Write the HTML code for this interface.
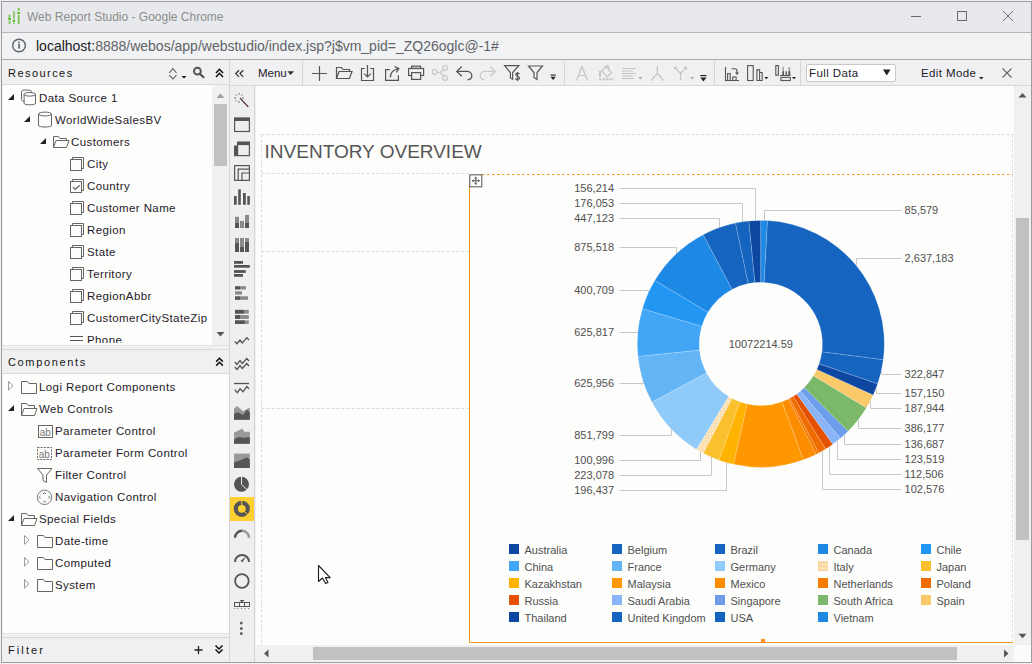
<!DOCTYPE html>
<html><head><meta charset="utf-8">
<style>
*{margin:0;padding:0;box-sizing:border-box}
html,body{width:1032px;height:664px;overflow:hidden;background:#f1f1f1;font-family:"Liberation Sans",sans-serif}
.a{position:absolute}
.tt{position:absolute;font-size:12px;color:#8d8d8d;white-space:nowrap;line-height:14px}
.t{position:absolute;font-size:11.5px;letter-spacing:0.4px;color:#1d1b2b;white-space:nowrap;line-height:14px}
.hdr{position:absolute;font-size:11px;color:#151515;letter-spacing:1.45px;white-space:nowrap;line-height:14px}
svg.ov{position:absolute;left:0;top:0;width:1032px;height:664px;overflow:visible}
</style></head><body>
 <!-- title bar -->
 <div class="a" style="left:1px;top:1px;width:1030px;height:31px;background:#e7e9ec"></div>
 <div class="a" style="left:1px;top:32px;width:1030px;height:1px;background:#b5b6b8"></div>
 <div class="tt" style="left:27px;top:10px">Web Report Studio - Google Chrome</div>
 <!-- address bar -->
 <div class="a" style="left:1px;top:33px;width:1030px;height:26px;background:#f1f2f3"></div>
 <div class="a" style="left:1px;top:59px;width:1030px;height:1px;background:#a9aaac"></div>
 <div class="a" style="left:36px;top:38px;font-size:14px;line-height:16px;color:#5f6368;white-space:nowrap"><span style="color:#202124">localhost:</span>8888/webos/app/webstudio/index.jsp?j$vm_pid=_ZQ26oglc@-1#</div>

 <!-- left panel -->
 <div class="a" style="left:2px;top:60px;width:227px;height:602px;background:#f0f0f2"></div>
 <div class="a" style="left:229px;top:60px;width:1px;height:602px;background:#d6d6d8"></div>
 <div class="a" style="left:2px;top:84px;width:227px;height:1px;background:#dadadc"></div>
 <div class="hdr" style="left:8px;top:66px">Resources</div>
 <div class="a" style="left:3px;top:85px;width:210px;height:260px;background:#fdfdfb"></div>
 <div class="a" style="left:212px;top:87px;width:17px;height:256px;background:#f1f1f1"></div>
 <div class="a" style="left:214px;top:104px;width:13px;height:62px;background:#c1c1c1"></div>
 <div class="a" style="left:2px;top:345px;width:227px;height:1px;background:#e4e4e6"></div>
 <div class="a" style="left:2px;top:349px;width:227px;height:1px;background:#dadadc"></div>
 <div class="a" style="left:2px;top:373px;width:227px;height:1px;background:#dadadc"></div>
 <div class="hdr" style="left:8px;top:355px;letter-spacing:1.65px">Components</div>
 <div class="a" style="left:3px;top:374px;width:226px;height:259px;background:#fdfdfb"></div>
 <div class="a" style="left:2px;top:633px;width:227px;height:1px;background:#e4e4e6"></div>
 <div class="a" style="left:2px;top:637px;width:227px;height:1px;background:#dadadc"></div>
 <div class="hdr" style="left:8px;top:643px;letter-spacing:2.1px">Filter</div>

 <!-- resources tree text -->
 <div class="t" style="left:39px;top:91px">Data Source 1</div>
 <div class="t" style="left:55px;top:113px">WorldWideSalesBV</div>
 <div class="t" style="left:71px;top:135px">Customers</div>
 <div class="t" style="left:87px;top:157px">City</div>
 <div class="t" style="left:87px;top:179px">Country</div>
 <div class="t" style="left:87px;top:201px">Customer Name</div>
 <div class="t" style="left:87px;top:223px">Region</div>
 <div class="t" style="left:87px;top:245px">State</div>
 <div class="t" style="left:87px;top:267px">Territory</div>
 <div class="t" style="left:87px;top:289px">RegionAbbr</div>
 <div class="t" style="left:87px;top:311px">CustomerCityStateZip</div>
 <div class="a" style="left:3px;top:325px;width:210px;height:18px;overflow:hidden">
  <div class="t" style="left:84px;top:8px">Phone</div>
 </div>

 <!-- components tree text -->
 <div class="t" style="left:39px;top:380px">Logi Report Components</div>
 <div class="t" style="left:39px;top:402px">Web Controls</div>
 <div class="t" style="left:55px;top:424px">Parameter Control</div>
 <div class="t" style="left:55px;top:446px">Parameter Form Control</div>
 <div class="t" style="left:55px;top:468px">Filter Control</div>
 <div class="t" style="left:55px;top:490px">Navigation Control</div>
 <div class="t" style="left:39px;top:512px">Special Fields</div>
 <div class="t" style="left:55px;top:534px">Date-time</div>
 <div class="t" style="left:55px;top:556px">Computed</div>
 <div class="t" style="left:55px;top:578px">System</div>

 <!-- main toolbar -->
 <div class="a" style="left:230px;top:60px;width:801px;height:25px;background:#f0f0f2"></div>
 <div class="a" style="left:230px;top:85px;width:801px;height:1px;background:#d8d8da"></div>
 <div class="t" style="left:258px;top:66px;letter-spacing:0">Menu</div>
 <div class="a" style="left:806px;top:64px;width:90px;height:18px;background:#fff;border:1px solid #c9c9cb;border-radius:2px"></div>
 <div class="t" style="left:809px;top:66px">Full Data</div>
 <div class="t" style="left:921px;top:66px">Edit Mode</div>

 <!-- vertical toolbar -->
 <div class="a" style="left:230px;top:86px;width:24px;height:576px;background:#efeff1"></div>
 <div class="a" style="left:254px;top:86px;width:1px;height:576px;background:#d4d4d6"></div>
 <div class="a" style="left:230px;top:497px;width:24px;height:24px;background:#fdcf30"></div>

 <!-- canvas -->
 <div class="a" style="left:256px;top:86px;width:758px;height:559px;background:#fdfdfb"></div>
 <!-- right scrollbar -->
 <div class="a" style="left:1014px;top:86px;width:17px;height:559px;background:#f0f0f2"></div>
 <div class="a" style="left:1016px;top:218px;width:13px;height:322px;background:#c1c1c1"></div>
 <!-- bottom scrollbar -->
 <div class="a" style="left:255px;top:645px;width:759px;height:17px;background:#f0f0f2"></div>
 <div class="a" style="left:313px;top:647px;width:644px;height:13px;background:#c1c1c1"></div>
 <div class="a" style="left:1014px;top:645px;width:17px;height:17px;background:#fbfbfb"></div>

 <!-- window border -->
 <div class="a" style="left:1px;top:1px;width:1031px;height:662px;border:1px solid #9d9d9d"></div>

 <svg class="ov" viewBox="0 0 1032 664">
  <!-- title icon -->
  <g fill="#6cbf3c">
   <rect x="8.7" y="14.8" width="1.6" height="2.6"/><rect x="8" y="17.7" width="3" height="2.2"/><rect x="8.7" y="20.6" width="1.6" height="3.3"/>
   <rect x="13" y="11.2" width="1.8" height="7.2" fill="#8cc566"/><rect x="12.7" y="19.5" width="2.4" height="2.5"/><rect x="13" y="22.8" width="1.8" height="1.1"/>
   <rect x="17.9" y="8" width="1.6" height="2.9"/><rect x="17" y="12.1" width="3.2" height="1.8"/><rect x="17.9" y="14.8" width="1.6" height="9.1"/>
  </g>
  <!-- window controls -->
  <g stroke="#6a6a6a" stroke-width="1" fill="none">
   <path d="M911 16.5H921"/>
   <rect x="957.5" y="11.5" width="9" height="9"/>
   <path d="M1003 11L1013 21M1013 11L1003 21"/>
  </g>
  <!-- info icon -->
  <g>
   <circle cx="19" cy="45.5" r="6.3" fill="none" stroke="#5f6368" stroke-width="1.4"/>
   <rect x="18.2" y="44" width="1.7" height="4.6" fill="#5f6368"/>
   <rect x="18.2" y="41.6" width="1.7" height="1.6" fill="#5f6368"/>
  </g>
  <!-- resources header icons -->
  <g fill="none" stroke="#666" stroke-width="1.15">
   <path d="M169.3 72.8L172.9 68.6L176.5 72.8M169.3 75.2L172.9 79L176.5 75.2"/>
  </g>
  <path d="M181.5 76H186.5L184 78.5Z" fill="#111"/>
  <g fill="none" stroke="#555" stroke-width="2">
   <circle cx="197.4" cy="71.2" r="3.4"/>
   <path d="M200 73.9L203.5 77.2" stroke-linecap="round" stroke-width="2.2"/>
  </g>
  <g fill="none" stroke="#111" stroke-width="1.6">
   <path d="M216 73L219.5 69.3L223 73M216 77L219.5 73.3L223 77"/>
  </g>
  <g fill="none" stroke="#111" stroke-width="1.6">
   <path d="M216.2 361.6L219.5 358.3L222.8 361.6M216.2 365.6L219.5 362.3L222.8 365.6"/>
  </g>
  <!-- scrollbar arrows left panel -->
  <path d="M216.5 98H224.5L220.5 93.5Z" fill="#a0a0a0"/>
  <path d="M216.5 332H224.5L220.5 336.5Z" fill="#555"/>

  <!-- tree triangles -->
  <g fill="#222">
   <path d="M14 94V100H8Z"/>
   <path d="M30 116V122H24Z"/>
   <path d="M46 138V144H40Z"/>
   <path d="M14 405V411H8Z"/>
   <path d="M14 515V521H8Z"/>
  </g>
  <g fill="none" stroke="#9a9a9a" stroke-width="1">
   <path d="M8.5 381.5L13 385.8L8.5 390.2Z"/>
   <path d="M24.5 535.5L29 539.8L24.5 544.2Z"/>
   <path d="M24.5 557.5L29 561.8L24.5 566.2Z"/>
   <path d="M24.5 579.5L29 583.8L24.5 588.2Z"/>
  </g>
  <!-- data source icon -->
  <g fill="none" stroke="#666" stroke-width="1">
   <path d="M21.5 91.5V99.5C21.5 100.5 22.5 101 24 101.3"/>
   <path d="M21.5 91.5C21.5 89.5 31.5 89.5 31.5 91.5"/>
   <path d="M31.5 91.5V92.6"/>
   <ellipse cx="29.8" cy="94.3" rx="5.7" ry="1.8" fill="#fdfdfb"/>
   <path d="M24.1 94.3V103.3C24.1 105.3 35.5 105.3 35.5 103.3V94.3"/>
  </g>
  <!-- database icon -->
  <g fill="none" stroke="#666" stroke-width="1">
   <ellipse cx="45" cy="114" rx="6.5" ry="1.9"/>
   <path d="M38.5 114V125.3C38.5 127.6 51.5 127.6 51.5 125.3V114"/>
  </g>
  <!-- open folder Customers -->
  <g fill="none" stroke="#666" stroke-width="1">
   <path d="M53.5 147.5V136.5H58.5L60 138.5H66.5V140.5"/>
   <path d="M53.5 147.5L56 140.5H69L66.5 147.5Z"/>
  </g>
  <!-- checkboxes -->
  <g fill="none" stroke="#666" stroke-width="1" id="cbs">
   <path d="M72.5 159.5V157.5H83.5V168.5H81.5"/><rect x="70.5" y="159.5" width="11" height="11"/>
   <path d="M72.5 181.5V179.5H83.5V190.5H81.5"/><rect x="70.5" y="181.5" width="11" height="11"/>
   <path d="M73 187L75.2 189.3L79.8 185.3" stroke="#666" stroke-width="1.2"/>
   <path d="M72.5 203.5V201.5H83.5V212.5H81.5"/><rect x="70.5" y="203.5" width="11" height="11"/>
   <path d="M72.5 225.5V223.5H83.5V234.5H81.5"/><rect x="70.5" y="225.5" width="11" height="11"/>
   <path d="M72.5 247.5V245.5H83.5V256.5H81.5"/><rect x="70.5" y="247.5" width="11" height="11"/>
   <path d="M72.5 269.5V267.5H83.5V278.5H81.5"/><rect x="70.5" y="269.5" width="11" height="11"/>
   <path d="M72.5 291.5V289.5H83.5V300.5H81.5"/><rect x="70.5" y="291.5" width="11" height="11"/>
   <path d="M72.5 313.5V311.5H83.5V322.5H81.5"/><rect x="70.5" y="313.5" width="11" height="11"/>
  </g>
  <g stroke="#555" stroke-width="1"><path d="M70 336.5H83M70 340.5H83"/></g>


  <!-- components icons -->
  <g fill="none" stroke="#666" stroke-width="1">
   <path d="M21.5 381.5H27.5L29 383.5H36.5V393.5H21.5Z"/>
   <path d="M21.5 415.5V403.5H26.5L28 405.5H34.5V408.5"/>
   <path d="M21.5 415.5L24 408.5H37L34.5 415.5Z"/>
   <rect x="38.5" y="425.5" width="14" height="12"/>
   <rect x="37.5" y="447.5" width="14" height="12" stroke-dasharray="2 1.2"/>
   <path d="M37.5 468.5H52L46.5 475V482.5L43 480.5V475Z"/>
   <circle cx="44.5" cy="497.3" r="7.2" stroke="#777"/>
   <path d="M21.5 525.5V513.5H26.5L28 515.5H34.5V518.5"/>
   <path d="M21.5 525.5L24 518.5H37L34.5 525.5Z"/>
   <path d="M37.5 535.5H43.5L45 537.5H52.5V547.5H37.5Z"/>
   <path d="M37.5 557.5H43.5L45 559.5H52.5V569.5H37.5Z"/>
   <path d="M37.5 579.5H43.5L45 581.5H52.5V591.5H37.5Z"/>
  </g>
  <g fill="#777" font-size="10" font-family="Liberation Sans">
   <text x="39.8" y="435.5">ab</text>
   <text x="38.8" y="457.5">ab</text>
  </g>
  <g fill="none" stroke="#6a6a6a" stroke-width="1">
   <path d="M43.1 494L44.5 492.6L45.9 494M43.1 500.8L44.5 502.2L45.9 500.8M40.5 496L39.1 497.4L40.5 498.8M48.5 496L49.9 497.4L48.5 498.8"/>
  </g>
  <!-- filter footer icons -->
  <path d="M198.5 646V654M194.5 650H202.5" stroke="#222" stroke-width="1.3"/>
  <g fill="none" stroke="#111" stroke-width="1.5">
   <path d="M215.5 645.5L219 649L222.5 645.5M215.5 649.5L219 653L222.5 649.5"/>
  </g>
  <!-- main toolbar -->
  <g fill="none" stroke="#333" stroke-width="1.3">
   <path d="M239 70.3L235.8 73.6L239 76.9M243.2 70.3L240 73.6L243.2 76.9"/>
  </g>
  <path d="M287.3 71.2H294L290.65 75Z" fill="#333"/>
  <g fill="#d4d4d6">
   <rect x="302" y="61" width="1" height="24"/>
   <rect x="564" y="61" width="1" height="24"/>
   <rect x="714" y="61" width="1" height="24"/>
   <rect x="800" y="61" width="1" height="24"/>
  </g>
  <g fill="none" stroke="#555" stroke-width="1.2">
   <path d="M319.5 66V81M312 73.5H327"/>
   <!-- folder open -->
   <path d="M336.5 78.5V67.5H341.5L343 69.5H349.5V71.5"/>
   <path d="M336.5 78.5L339 71.5H352L349.5 78.5Z"/>
   <!-- download -->
   <path d="M364.8 68.5H361.5V80.5H373.5V68.5H370.2"/>
   <path d="M367.5 65V77M364.2 73.6L367.5 76.9L370.8 73.6"/>
   <!-- export -->
   <path d="M389.8 69.6H385.6V80.4H398.4V75.3"/>
   <path d="M390.3 77.6C390.3 72.5 393 69.6 398.8 68.6M394.6 66.5L398.9 68.6L396.3 72.4"/>
   <!-- print -->
   <rect x="411.6" y="66.2" width="9" height="2.2"/>
   <rect x="408.6" y="68.5" width="15" height="7" fill="#f0f0f2"/>
   <rect x="411.6" y="72.6" width="9" height="6.8" fill="#f0f0f2"/>
  </g>
  <g fill="none" stroke="#c9c9c9" stroke-width="1.2">
   <circle cx="434.6" cy="71.9" r="2.3"/><circle cx="445.1" cy="67.9" r="2.3"/><circle cx="445.1" cy="78" r="2.3"/>
   <path d="M437 72.3H440.3L443.4 69.6M440.3 72.3L443.4 76"/>
  </g>
  <g fill="none" stroke="#555" stroke-width="1.3">
   <path d="M456.8 71.4H467C469.8 71.4 471.8 73.3 471.8 75.7C471.8 77.9 470.2 79.5 467.6 79.9"/>
   <path d="M461.8 66.5L456.8 71.4L461.8 76.3"/>
  </g>
  <g fill="none" stroke="#c9c9c9" stroke-width="1.3">
   <path d="M495.2 71.4H485C482.2 71.4 480.2 73.3 480.2 75.7C480.2 77.9 481.8 79.5 484.4 79.9"/>
   <path d="M490.2 66.5L495.2 71.4L490.2 76.3"/>
  </g>
  <g fill="none" stroke="#555" stroke-width="1.2">
   <path d="M504.6 65.6H518.8L512.6 72.6V79.2L510.4 77.9V72.6Z"/>
   <path d="M519.4 74.2C519.2 72.8 515.7 72.6 515.7 74.5C515.7 76.3 519.6 76.1 519.6 78.1C519.6 80 515.6 79.9 515.4 78.4M517.5 72V81" stroke-width="1.2"/>
   <path d="M528.5 66H542.5L537 72.5V79.5L534 77.5V72.5Z"/>
  </g>
  <g fill="#222"><rect x="550.5" y="74.5" width="5.3" height="1.1"/><path d="M550.5 76.8H555.8L553.15 80Z"/></g>
  <!-- disabled text tools -->
  <g fill="none" stroke="#c4c4c4" stroke-width="1.2">
   <path d="M576.5 80.5L582 66.5L587.5 80.5M578.5 75.5H585.5"/>
   <path d="M601.8 71L606 66.8L611.6 72.6L607 76.8Z"/>
   <path d="M604.8 68C604.8 65.2 608.8 65.2 608.8 68.2V71.3"/>
   <path d="M600 71V77" stroke-width="2"/>
   <path d="M599 79.3H613.5" stroke-width="2" stroke-dasharray="2.5 1"/>
   <path d="M622 68.5H636M622 71H633M622 73.5H636M622 76H633M622 78.5H634" stroke-width="1"/>
   <path d="M657.3 66V73.5L651 80.5M657.3 73.5L663.6 80.5"/>
   <path d="M680.5 73.5V80.5M680.5 73.5L674.5 67M680.5 73.5L686.5 67M674.5 67V69.5M674.5 67H677M686.5 67V69.5M686.5 67H684"/>
  </g>
  <g fill="#aaa"><path d="M638.3 77H642.3L640.3 79.4Z"/><path d="M690.2 77H694.2L692.2 79.4Z"/></g>
  <g fill="#222"><rect x="700.3" y="75" width="6.2" height="1.2"/><path d="M700.3 77.5H706.5L703.4 81.5Z"/></g>
  <!-- chart tools -->
  <g fill="none" stroke="#555" stroke-width="1.1">
   <path d="M725.5 67V80.5H739"/>
   <rect x="727.6" y="73.6" width="2.6" height="6.9"/>
   <rect x="732.7" y="77" width="3.4" height="3.5"/>
   <path d="M731.5 68.8H735C736.5 68.8 737 70 737 71.5V73"/>
   <rect x="747.6" y="65.6" width="5.6" height="14.9"/>
   <path d="M756.9 80.5V69.9H759.6V72.5H762.2V80.5ZM759.6 72.5V80.5"/>
   <rect x="775.8" y="65.6" width="2.6" height="9.6"/>
   <path d="M780 75.5H790.5"/>
   <rect x="780.9" y="77.4" width="9.4" height="3.1"/>
  </g>
  <path d="M735 72.5H739L737 75Z" fill="#555"/>
  <g fill="#aaa"><rect x="782.4" y="67" width="1.6" height="8"/><rect x="788.4" y="67" width="1.8" height="8"/></g>
  <g fill="#555"><rect x="782.4" y="71.3" width="1.6" height="4"/><rect x="785.5" y="71.3" width="1.4" height="4"/><rect x="788.4" y="71.3" width="1.8" height="4"/></g>
  <g fill="#222"><path d="M764.3 77H768.3L766.3 79.2Z"/><path d="M792 77H796L794 79.2Z"/></g>
  <!-- select -->
  <path d="M883 69.5H890.5L886.75 75.5Z" fill="#222"/>
  <path d="M979 77H983.5L981.25 79.5Z" fill="#222"/>
  <path d="M1002.5 68.5L1011.5 77.5M1011.5 68.5L1002.5 77.5" stroke="#666" stroke-width="1.1"/>
  <!-- canvas scrollbar arrows -->
  <path d="M1018.5 97.5H1026.5L1022.5 93Z" fill="#555"/>
  <path d="M1018.5 633.8H1026.5L1022.5 638.3Z" fill="#555"/>
  <path d="M268.5 649.5V657.5L264 653.5Z" fill="#555"/>
  <path d="M1004 649.5V657.5L1008.5 653.5Z" fill="#555"/>

  <!-- vertical toolbar -->
  <g fill="none" stroke="#666" stroke-width="1">
   <path d="M240 98L248.3 107" stroke="#5a3a45" stroke-width="1.2"/>
   <path d="M239 93V95M239 101V103M234 98H236M242 98H244M235.5 94.5L236.8 95.8M241.2 100.2L242.5 101.5M235.5 101.5L236.8 100.2M241.2 95.8L242.5 94.5" stroke="#777"/>
  </g>
  <g fill="none" stroke="#555" stroke-width="1.2">
   <rect x="234.6" y="118.2" width="14.8" height="13.3"/>
   <rect x="237.6" y="142.3" width="11.8" height="13.3"/>
   <rect x="234.6" y="165.6" width="14.8" height="14.8"/>
   <path d="M238.2 180.4V169.2H249.4M242 180.4V173H249.4"/>
  </g>
  <g fill="#555">
   <rect x="234" y="117.6" width="16" height="3.4"/>
   <rect x="237" y="141.7" width="13" height="3.4"/>
   <rect x="234" y="145.5" width="3.3" height="10.7"/>
   <!-- bars -->
   <rect x="234" y="196" width="2.7" height="8.8"/><rect x="238.2" y="189.3" width="2.6" height="15.5"/><rect x="243" y="193" width="2.8" height="11.8"/><rect x="247.3" y="196" width="2.5" height="8.8"/>
  </g>
  <g fill="#8a8a8a">
   <rect x="235" y="216.8" width="4" height="11.2"/><rect x="240" y="220.9" width="4" height="7.1"/><rect x="245" y="214.9" width="4" height="13.1"/>
   <rect x="235" y="238" width="4" height="14"/><rect x="240" y="238" width="4" height="14"/><rect x="245" y="238" width="4" height="14"/>
   <rect x="240" y="286.2" width="6" height="3.3"/><rect x="235" y="291.3" width="7" height="3.3"/><rect x="240" y="296.3" width="8" height="3.5"/>
   <rect x="235" y="309.9" width="13.8" height="3.7"/><rect x="235" y="315.1" width="13.8" height="3.8"/><rect x="235" y="320.4" width="13.8" height="3.5"/>
  </g>
  <g fill="#555">
   <rect x="235" y="222.9" width="4" height="5.1"/><rect x="245" y="222.9" width="4" height="5.1"/>
   <rect x="235" y="243" width="4" height="9"/><rect x="240" y="247" width="4" height="5"/><rect x="245" y="242" width="4" height="10"/>
   <rect x="234" y="261" width="9" height="2.8"/><rect x="234" y="265" width="15.8" height="2.7"/><rect x="234" y="270.1" width="11.8" height="2.8"/><rect x="234" y="274" width="9" height="2.8"/>
   <rect x="235" y="286.2" width="5" height="3.3"/><rect x="235" y="296.3" width="5" height="3.5"/>
   <rect x="235" y="309.9" width="8.7" height="3.7"/><rect x="235" y="315.1" width="5" height="3.8"/><rect x="235" y="320.4" width="9.7" height="3.5"/>
  </g>
  <g fill="none" stroke="#555" stroke-width="1.3">
   <path d="M234.8 341.5L237 343.7L240 340L242.3 343L246.8 337.7L249 340"/>
   <path d="M234.8 362L237 364.5L240 360.5L242.3 363.5L246.8 358.5L249 361"/>
   <path d="M234.8 367L237 369.5L240 365.5L242.3 368.5L246.8 363.5L249 366"/>
   <path d="M234 383.5H249"/>
   <path d="M234.8 389.6L237.3 392.6L240 388.8L243 391.8L246.8 386.5L249 388.8"/>
  </g>
  <g fill="#999">
   <path d="M234 408.5L237.3 406L243 411.3L249.8 407.5V419.7H234Z"/>
   <path d="M234 432.5L242.3 428.7L244.5 431.8H249.8V443.8H234Z"/>
   <rect x="234" y="453.6" width="15.8" height="14.3"/>
  </g>
  <g fill="#555">
   <path d="M234 413.7L237.8 412.2L243 415L246.8 409.8L249.8 412.5V419.7H234Z"/>
   <path d="M234 439.3L238.5 437L243.8 437.8L249.8 437V443.8H234Z"/>
   <path d="M234 462.5L240 460.3L242.3 459.5L246.8 457.3L249.8 459.5V467.9H234Z"/>
  </g>
  <!-- pie -->
  <circle cx="241.5" cy="484.3" r="7.5" fill="#555"/>
  <path d="M241.5 476.5V484.3L247 489.8" fill="none" stroke="#efeff1" stroke-width="1"/>
  <!-- donut -->
  <circle cx="241.8" cy="508.8" r="6" fill="none" stroke="#555" stroke-width="4.2"/>
  <path d="M241.8 500V505" stroke="#fdcf30" stroke-width="1"/>
  <path d="M243.8 510.8L248.5 515.5" stroke="#fdcf30" stroke-width="1"/>
  <!-- half gauge -->
  <path d="M235 537.8A7 7 0 0 1 242 530.8" fill="none" stroke="#555" stroke-width="2.4"/>
  <path d="M242 530.8A7 7 0 0 1 249 537.8" fill="none" stroke="#999" stroke-width="2.4"/>
  <!-- speedometer -->
  <path d="M235 561.9A7 7 0 0 1 249 561.9" fill="none" stroke="#555" stroke-width="2"/>
  <path d="M240.5 561L246 556.5L242.5 562.3Z" fill="#555"/>
  <!-- ring -->
  <circle cx="241.9" cy="581" r="6.8" fill="none" stroke="#555" stroke-width="1.8"/>
  <!-- table/flow -->
  <g fill="none" stroke="#555" stroke-width="1">
   <rect x="234.5" y="602.5" width="15" height="4"/>
   <path d="M239.5 602.5V606.5M244.5 602.5V606.5"/>
  </g>
  <path d="M239.5 600H244.5L242 602.5Z" fill="#555"/>
  <g fill="#777"><rect x="234.3" y="608" width="1" height="1"/><rect x="237.5" y="608" width="1" height="1"/><rect x="241" y="608" width="1" height="1"/><rect x="244.5" y="608" width="1" height="1"/><rect x="248" y="608" width="1" height="1"/></g>
  <g fill="#666"><circle cx="241.3" cy="623" r="1.5"/><circle cx="241.3" cy="628.4" r="1.5"/><circle cx="241.3" cy="633.6" r="1.5"/></g>

 </svg>
<!-- CANVAS START -->
 <svg class="ov" viewBox="0 0 1032 664">
  <defs><clipPath id="cv"><rect x="256" y="86" width="758" height="559"/></clipPath></defs>
  <g clip-path="url(#cv)">
   <g fill="none" stroke="#d9dadc" stroke-width="1" stroke-dasharray="3 2">
    <path d="M261.5 134.5H1012.5"/>
    <path d="M261.5 134.5V645"/>
    <path d="M1012.5 134.5V645"/>
    <path d="M261.5 173.5H469"/>
    <path d="M261.5 251.5H469"/>
    <path d="M261.5 408.5H469"/>
   </g>
   <text x="264.6" y="157.6" font-family="Liberation Sans" font-size="19" fill="#555">INVENTORY OVERVIEW</text>
   <path d="M482 174.5H1013" stroke="#f7931e" stroke-width="1" stroke-dasharray="2.4 2.6" fill="none"/>
   <path d="M469.5 186V642.5H1013" stroke="#f7931e" stroke-width="1" fill="none"/>
   <rect x="761" y="639" width="4" height="4" fill="#f7931e"/>
   <rect x="469.8" y="174.8" width="12" height="12" fill="#fdfdfb" stroke="#5f5f5f" stroke-width="1.1"/>
   <g fill="none" stroke="#5f5f5f" stroke-width="1.1"><path d="M475.8 177.5V184.2M472.3 180.8H479.3"/></g>
   <g fill="#5f5f5f"><path d="M474.2 178.6L475.8 176.6L477.4 178.6Z"/><path d="M474.2 183.1L475.8 185.1L477.4 183.1Z"/><path d="M473.6 179.2L471.6 180.8L473.6 182.4Z"/><path d="M478 179.2L480 180.8L478 182.4Z"/></g>
<defs><pattern id="hatch" width="3" height="3" patternUnits="userSpaceOnUse"><rect width="3" height="3" fill="#fde2b6"/><rect x="0" y="0" width="1" height="1" fill="#f6d39e"/><rect x="2" y="1" width="1" height="1" fill="#fff0d8"/></pattern></defs>
<g fill="none" stroke="#c8c8c8" stroke-width="1"><path d="M755.5 220.5V188.5H619.5"/><path d="M742.5 221.8V203.5H619.5"/><path d="M719.5 227.7V218.5H619.5"/><path d="M676.5 254.3V247.5H619.5"/><path d="M648.5 294.3V290.5H619.5"/><path d="M638.5 332.4V332.5H619.5"/><path d="M643.5 380.1V383.5H619.5"/><path d="M671.5 428.8V435.5H619.5"/><path d="M700.5 451.3V460.5H619.5"/><path d="M711.5 456.9V475.5H619.5"/><path d="M726.5 462.5V490.5H619.5"/><path d="M764.5 220.4V210.5H901.5"/><path d="M856.5 264.8V258.5H901.5"/><path d="M881.5 371.9V374.5H901.5"/><path d="M876.5 389.5V393.5H901.5"/><path d="M870.5 401.6V408.5H901.5"/><path d="M858.5 420.1V428.5H901.5"/><path d="M844.5 434.9V444.5H901.5"/><path d="M837.5 441.3V459.5H901.5"/><path d="M829.5 446.7V474.5H901.5"/><path d="M822.5 451.0V489.5H901.5"/></g>
<path d="M760.80 220.40A123.5 123.5 0 0 0 748.78 220.99L754.81 282.59A61.6 61.6 0 0 1 760.80 282.30Z" fill="#0d47a1" stroke="#fff" stroke-opacity="0.35" stroke-width="0.5"/>
<path d="M748.78 220.99A123.5 123.5 0 0 0 735.38 223.04L748.12 283.62A61.6 61.6 0 0 1 754.81 282.59Z" fill="#1565c0" stroke="#fff" stroke-opacity="0.35" stroke-width="0.5"/>
<path d="M735.38 223.04A123.5 123.5 0 0 0 703.09 234.71L732.02 289.44A61.6 61.6 0 0 1 748.12 283.62Z" fill="#1565c0" stroke="#fff" stroke-opacity="0.35" stroke-width="0.5"/>
<path d="M703.09 234.71A123.5 123.5 0 0 0 654.77 280.57L707.92 312.31A61.6 61.6 0 0 1 732.02 289.44Z" fill="#1e88e5" stroke="#fff" stroke-opacity="0.35" stroke-width="0.5"/>
<path d="M654.77 280.57A123.5 123.5 0 0 0 642.40 308.77L701.75 326.38A61.6 61.6 0 0 1 707.92 312.31Z" fill="#2196f3" stroke="#fff" stroke-opacity="0.35" stroke-width="0.5"/>
<path d="M642.40 308.77A123.5 123.5 0 0 0 637.94 356.47L699.52 350.17A61.6 61.6 0 0 1 701.75 326.38Z" fill="#42a5f5" stroke="#fff" stroke-opacity="0.35" stroke-width="0.5"/>
<path d="M637.94 356.47A123.5 123.5 0 0 0 651.97 402.28L706.52 373.02A61.6 61.6 0 0 1 699.52 350.17Z" fill="#64b5f6" stroke="#fff" stroke-opacity="0.35" stroke-width="0.5"/>
<path d="M651.97 402.28A123.5 123.5 0 0 0 696.56 449.38L728.76 396.51A61.6 61.6 0 0 1 706.52 373.02Z" fill="#90caf9" stroke="#fff" stroke-opacity="0.35" stroke-width="0.5"/>
<path d="M696.56 449.38A123.5 123.5 0 0 0 703.33 453.21L732.13 398.42A61.6 61.6 0 0 1 728.76 396.51Z" fill="url(#hatch)" stroke="#fff" stroke-opacity="0.35" stroke-width="0.5"/>
<path d="M703.33 453.21A123.5 123.5 0 0 0 719.05 460.13L739.97 401.87A61.6 61.6 0 0 1 732.13 398.42Z" fill="#fbc02d" stroke="#fff" stroke-opacity="0.35" stroke-width="0.5"/>
<path d="M719.05 460.13A123.5 123.5 0 0 0 733.57 464.36L747.22 403.98A61.6 61.6 0 0 1 739.97 401.87Z" fill="#ffb300" stroke="#fff" stroke-opacity="0.35" stroke-width="0.5"/>
<path d="M733.57 464.36A123.5 123.5 0 0 0 803.43 459.81L782.06 401.71A61.6 61.6 0 0 1 747.22 403.98Z" fill="#ff9800" stroke="#fff" stroke-opacity="0.35" stroke-width="0.5"/>
<path d="M803.43 459.81A123.5 123.5 0 0 0 815.94 454.41L788.30 399.02A61.6 61.6 0 0 1 782.06 401.71Z" fill="#fb8c00" stroke="#fff" stroke-opacity="0.35" stroke-width="0.5"/>
<path d="M815.94 454.41A123.5 123.5 0 0 0 818.82 452.92L789.74 398.28A61.6 61.6 0 0 1 788.30 399.02Z" fill="#f57c00" stroke="#fff" stroke-opacity="0.35" stroke-width="0.5"/>
<path d="M818.82 452.92A123.5 123.5 0 0 0 825.67 448.99L793.16 396.32A61.6 61.6 0 0 1 789.74 398.28Z" fill="#ef6c00" stroke="#fff" stroke-opacity="0.35" stroke-width="0.5"/>
<path d="M825.67 448.99A123.5 123.5 0 0 0 832.88 444.18L796.75 393.92A61.6 61.6 0 0 1 793.16 396.32Z" fill="#e65100" stroke="#fff" stroke-opacity="0.35" stroke-width="0.5"/>
<path d="M832.88 444.18A123.5 123.5 0 0 0 840.39 438.34L800.50 391.00A61.6 61.6 0 0 1 796.75 393.92Z" fill="#8ab4f8" stroke="#fff" stroke-opacity="0.35" stroke-width="0.5"/>
<path d="M840.39 438.34A123.5 123.5 0 0 0 848.14 431.22L804.36 387.45A61.6 61.6 0 0 1 800.50 391.00Z" fill="#6d9eeb" stroke="#fff" stroke-opacity="0.35" stroke-width="0.5"/>
<path d="M848.14 431.22A123.5 123.5 0 0 0 866.45 407.86L813.50 375.80A61.6 61.6 0 0 1 804.36 387.45Z" fill="#7cb86a" stroke="#fff" stroke-opacity="0.35" stroke-width="0.5"/>
<path d="M866.45 407.86A123.5 123.5 0 0 0 873.20 395.06L816.87 369.42A61.6 61.6 0 0 1 813.50 375.80Z" fill="#f9c96a" stroke="#fff" stroke-opacity="0.35" stroke-width="0.5"/>
<path d="M873.20 395.06A123.5 123.5 0 0 0 877.67 383.81L819.09 363.81A61.6 61.6 0 0 1 816.87 369.42Z" fill="#0d47a1" stroke="#fff" stroke-opacity="0.35" stroke-width="0.5"/>
<path d="M877.67 383.81A123.5 123.5 0 0 0 883.29 359.63L821.90 351.74A61.6 61.6 0 0 1 819.09 363.81Z" fill="#1565c0" stroke="#fff" stroke-opacity="0.35" stroke-width="0.5"/>
<path d="M883.29 359.63A123.5 123.5 0 0 0 767.39 220.58L764.09 282.39A61.6 61.6 0 0 1 821.90 351.74Z" fill="#1565c0" stroke="#fff" stroke-opacity="0.35" stroke-width="0.5"/>
<path d="M767.39 220.58A123.5 123.5 0 0 0 760.80 220.40L760.80 282.30A61.6 61.6 0 0 1 764.09 282.39Z" fill="#1e88e5" stroke="#fff" stroke-opacity="0.35" stroke-width="0.5"/>
<g font-family="Liberation Sans" font-size="11" fill="#505050"><text x="614" y="192.2" text-anchor="end">156,214</text><text x="614" y="207.1" text-anchor="end">176,053</text><text x="614" y="222.1" text-anchor="end">447,123</text><text x="614" y="250.6" text-anchor="end">875,518</text><text x="614" y="294.0" text-anchor="end">400,709</text><text x="614" y="335.5" text-anchor="end">625,817</text><text x="614" y="387.0" text-anchor="end">625,956</text><text x="614" y="439.4" text-anchor="end">851,799</text><text x="614" y="463.7" text-anchor="end">100,996</text><text x="614" y="479.1" text-anchor="end">223,078</text><text x="614" y="493.7" text-anchor="end">196,437</text><text x="904.6" y="214.3">85,579</text><text x="904.6" y="262.1">2,637,183</text><text x="904.6" y="378.3">322,847</text><text x="904.6" y="397.1">157,150</text><text x="904.6" y="412.1">187,944</text><text x="904.6" y="431.9">386,177</text><text x="904.6" y="447.9">136,687</text><text x="904.6" y="462.7">123,519</text><text x="904.6" y="477.8">112,506</text><text x="904.6" y="492.6">102,576</text></g>
<text x="760.8" y="347.9" text-anchor="middle" font-family="Liberation Sans" font-size="11" fill="#505050">10072214.59</text>
<g font-family="Liberation Sans" font-size="11" fill="#505050"><rect x="509" y="544" width="10" height="10" fill="#0d47a1"/><text x="524.5" y="554">Australia</text><rect x="612" y="544" width="10" height="10" fill="#1565c0"/><text x="627.5" y="554">Belgium</text><rect x="715" y="544" width="10" height="10" fill="#1565c0"/><text x="730.5" y="554">Brazil</text><rect x="818" y="544" width="10" height="10" fill="#1e88e5"/><text x="833.5" y="554">Canada</text><rect x="921" y="544" width="10" height="10" fill="#2196f3"/><text x="936.5" y="554">Chile</text><rect x="509" y="561" width="10" height="10" fill="#42a5f5"/><text x="524.5" y="571">China</text><rect x="612" y="561" width="10" height="10" fill="#64b5f6"/><text x="627.5" y="571">France</text><rect x="715" y="561" width="10" height="10" fill="#90caf9"/><text x="730.5" y="571">Germany</text><rect x="818" y="561" width="10" height="10" fill="#ffe0b2"/><path d="M818.5 561V571M818 562.5H828M818 566.5H828M818 570.5H828" stroke="#f7cf98" stroke-width="1" fill="none"/><text x="833.5" y="571">Italy</text><rect x="921" y="561" width="10" height="10" fill="#fbc02d"/><text x="936.5" y="571">Japan</text><rect x="509" y="578" width="10" height="10" fill="#ffb300"/><text x="524.5" y="588">Kazakhstan</text><rect x="612" y="578" width="10" height="10" fill="#ff9800"/><text x="627.5" y="588">Malaysia</text><rect x="715" y="578" width="10" height="10" fill="#fb8c00"/><text x="730.5" y="588">Mexico</text><rect x="818" y="578" width="10" height="10" fill="#f57c00"/><text x="833.5" y="588">Netherlands</text><rect x="921" y="578" width="10" height="10" fill="#ef6c00"/><text x="936.5" y="588">Poland</text><rect x="509" y="595" width="10" height="10" fill="#e65100"/><text x="524.5" y="605">Russia</text><rect x="612" y="595" width="10" height="10" fill="#8ab4f8"/><text x="627.5" y="605">Saudi Arabia</text><rect x="715" y="595" width="10" height="10" fill="#6d9eeb"/><text x="730.5" y="605">Singapore</text><rect x="818" y="595" width="10" height="10" fill="#7cb86a"/><text x="833.5" y="605">South Africa</text><rect x="921" y="595" width="10" height="10" fill="#f9c96a"/><text x="936.5" y="605">Spain</text><rect x="509" y="612" width="10" height="10" fill="#0d47a1"/><text x="524.5" y="622">Thailand</text><rect x="612" y="612" width="10" height="10" fill="#1565c0"/><text x="627.5" y="622">United Kingdom</text><rect x="715" y="612" width="10" height="10" fill="#1565c0"/><text x="730.5" y="622">USA</text><rect x="818" y="612" width="10" height="10" fill="#1e88e5"/><text x="833.5" y="622">Vietnam</text></g>   <!-- mouse cursor -->
   <path d="M318.5 565.5V581.5L322.5 578L325.6 583.6L327.9 582.6L325.4 577.6H330.2Z" fill="#fff" stroke="#1a1a1a" stroke-width="1.1" stroke-linejoin="round"/>
  </g>
 </svg>

<!-- CANVAS END -->
</body></html>
